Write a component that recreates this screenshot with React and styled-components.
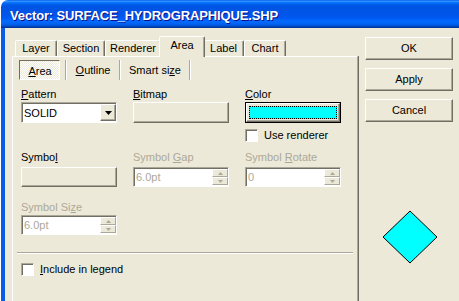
import styled, { createGlobalStyle, css } from "styled-components";

const face = "#ECE9D8";
const shadow = "#ACA899";
const dark = "#716F64";

const GlobalStyle = createGlobalStyle`
  html, body {
    margin: 0;
    padding: 0;
    background: #fff;
    overflow: hidden;
  }
  body {
    font-family: "Liberation Sans", Arial, sans-serif;
    font-size: 11px;
    color: #000;
  }
`;

const raised = css`
  box-sizing: border-box;
  background: ${face};
  border: 1px solid;
  border-color: #fff ${dark} ${dark} #fff;
  box-shadow: inset -1px -1px ${shadow};
`;

const sunken = css`
  box-sizing: border-box;
  border: 1px solid;
  border-color: ${shadow} #fff #fff ${shadow};
  box-shadow: inset 1px 1px ${dark};
`;

const Window = styled.div`
  display: flex;
  flex-direction: column;
  width: 458px;
  height: 301px;
  margin-left: 1px;
  overflow: hidden;
`;

const TitleBar = styled.div`
  flex: none;
  height: 28px;
  box-sizing: border-box;
  display: flex;
  align-items: center;
  padding: 2px 0 0 9px;
  border-radius: 7px 0 0 0;
  background: linear-gradient(
    to bottom,
    #0058ee 0%,
    #3593ff 4%,
    #288eff 6%,
    #127dff 8%,
    #036ffc 10%,
    #0262ee 14%,
    #0057e5 20%,
    #0054e3 24%,
    #0055eb 56%,
    #005bf5 66%,
    #026afe 76%,
    #0062ef 86%,
    #0052d6 92%,
    #0040ab 96%,
    #003092 100%
  );
  color: #fff;
  font: bold 13px "Liberation Sans", Arial, sans-serif;
  letter-spacing: -0.15px;
  text-shadow: 1px 1px #0f1089;
  white-space: nowrap;
`;

const Frame = styled.div`
  flex: 1;
  min-height: 0;
  display: flex;
  background: ${face};
  border-left: 4px solid #0a5be6;
  padding: 8px 0 0 7px;
`;

const LeftCol = styled.div`
  width: 346px;
  display: flex;
  flex-direction: column;
`;

const TabStrip = styled.div`
  height: 20px;
  display: flex;
  align-items: flex-end;
  padding-left: 3px;
`;

const Tab = styled.div`
  box-sizing: border-box;
  width: ${(p) => (p.$active ? p.$w + 4 : p.$w)}px;
  height: ${(p) => (p.$active ? 21 : 16)}px;
  margin: ${(p) => (p.$active ? "0 -2px -1px" : "0")};
  padding-top: ${(p) => (p.$active ? 1 : 0)}px;
  position: relative;
  z-index: ${(p) => (p.$active ? 1 : 0)};
  background: ${face};
  border: 1px solid;
  border-bottom: none;
  border-color: #fff ${dark} transparent #fff;
  border-radius: 2px 2px 0 0;
  box-shadow: inset -1px 0 ${shadow};
  line-height: 15px;
  text-align: center;
  white-space: nowrap;
`;

const Panel = styled.div`
  flex: 1;
  display: flex;
  flex-direction: column;
  border-top: 1px solid #fff;
  border-left: 1px solid #fff;
  border-right: 1px solid ${shadow};
  box-shadow: 1px 0 0 ${dark};
  padding: 3px 0 0 8px;
`;

const SubTabs = styled.div`
  display: flex;
  align-items: center;
  height: 20px;
  margin-left: -2px;
`;

const SubTab = styled.div`
  box-sizing: border-box;
  width: ${(p) => p.$w}px;
  height: 20px;
  line-height: 18px;
  text-align: center;
  white-space: nowrap;
  border: 1px solid transparent;
  ${(p) =>
    p.$active &&
    css`
      border-color: ${dark} #fff #fff ${dark};
      padding: 1px 0 0 1px;
      background: repeating-conic-gradient(#fff 0 25%, ${face} 0 50%) 0 0 / 2px 2px;
    `}
`;

const SubSep = styled.div`
  width: 2px;
  height: 20px;
  margin-left: ${(p) => p.$ml || 0}px;
  background: linear-gradient(to right, ${shadow} 50%, #fff 50%);
`;

const U = styled.span`
  text-decoration: underline;
`;

const Grid = styled.div`
  display: grid;
  grid-template-columns: repeat(3, 96px);
  column-gap: 16px;
  margin-top: ${(p) => p.$mt}px;
`;

const Field = styled.div`
  display: flex;
  flex-direction: column;
  grid-column: ${(p) => p.$col || "auto"};
`;

const Label = styled.div`
  height: 16px;
  line-height: 16px;
  margin-bottom: ${(p) => p.$gap || 0}px;
  color: ${(p) => (p.$disabled ? shadow : "#000")};
  white-space: nowrap;
`;

const Combo = styled.div`
  ${sunken};
  height: 21px;
  display: flex;
  align-items: center;
  background: #fff;
  padding-left: 2px;
`;

const DropBtn = styled.div`
  ${raised};
  width: 16px;
  height: 17px;
  margin-left: auto;
  display: flex;
  align-items: center;
  justify-content: center;
`;

const PlainButton = styled.div`
  ${raised};
  height: ${(p) => p.$h || 21}px;
`;

const ColorButton = styled.div`
  box-sizing: border-box;
  height: 21px;
  border: 1px solid #000;
  display: flex;
`;

const ColorInner = styled.div`
  ${raised};
  flex: 1;
  display: flex;
  padding: 2px;
`;

const Swatch = styled.div`
  flex: 1;
  background: #00ffff;
  border: 1px dotted #000;
`;

const CheckRow = styled.div`
  display: flex;
  align-items: center;
  gap: 6px;
  height: 13px;
  line-height: 13px;
  white-space: nowrap;
  grid-column: ${(p) => p.$col || "auto"};
  margin-top: ${(p) => p.$mt || 0}px;
`;

const Box = styled.div`
  ${sunken};
  width: 13px;
  height: 13px;
  background: #fff;
`;

const SpinBox = styled.div`
  ${sunken};
  height: 20px;
  display: flex;
  align-items: center;
  background: #fff;
  padding-left: 2px;
  color: ${shadow};
`;

const SpinCol = styled.div`
  width: 16px;
  height: 16px;
  margin-left: auto;
  display: flex;
  flex-direction: column;
`;

const SpinBtn = styled.div`
  flex: 1;
  box-sizing: border-box;
  background: ${face};
  border: 1px solid;
  border-color: #fff ${shadow} ${shadow} #fff;
  display: flex;
  align-items: center;
  justify-content: center;
`;

const Separator = styled.div`
  height: 0;
  margin: 17px 4px 0 -4px;
  border-top: 1px solid ${shadow};
  border-bottom: 1px solid #fff;
`;

const RightCol = styled.div`
  width: 88px;
  margin-left: 7px;
  padding-top: 1px;
  display: flex;
  flex-direction: column;
  align-items: center;
  gap: 8px;
`;

const DlgButton = styled.div`
  ${raised};
  width: 88px;
  height: 23px;
  line-height: 21px;
  text-align: center;
`;

const Diamond = styled.svg`
  margin: 80px 0 0 2px;
  display: block;
`;

const Arrow = ({ up, color = "#000", w = 7, h = 4 }) => (
  <svg width={w} height={h} viewBox={`0 0 ${w} ${h}`}>
    <polygon
      points={up ? `${w / 2},0 ${w},${h} 0,${h}` : `0,0 ${w},0 ${w / 2},${h}`}
      fill={color}
    />
  </svg>
);

const Spinner = ({ value }) => (
  <SpinBox>
    {value}
    <SpinCol>
      <SpinBtn>
        <Arrow up w={5} h={3} color={shadow} />
      </SpinBtn>
      <SpinBtn>
        <Arrow w={5} h={3} color={shadow} />
      </SpinBtn>
    </SpinCol>
  </SpinBox>
);

const tabs = [
  ["Layer", 42],
  ["Section", 48],
  ["Renderer", 56],
  ["Area", 42],
  ["Label", 41],
  ["Chart", 42],
];

export default function App() {
  return (
    <>
      <GlobalStyle />
      <Window>
        <TitleBar>Vector: SURFACE_HYDROGRAPHIQUE.SHP</TitleBar>
        <Frame>
          <LeftCol>
            <TabStrip>
              {tabs.map(([name, w]) => (
                <Tab key={name} $w={w} $active={name === "Area"}>
                  {name}
                </Tab>
              ))}
            </TabStrip>
            <Panel>
              <SubTabs>
                <SubTab $w={41} $active>
                  <U>A</U>rea
                </SubTab>
                <SubSep $ml={5} />
                <SubTab $w={52}>
                  <U>O</U>utline
                </SubTab>
                <SubSep />
                <SubTab $w={68}>
                  Smart si<U>z</U>e
                </SubTab>
                <SubSep />
              </SubTabs>

              <Grid $mt={6}>
                <Field>
                  <Label>
                    <U>P</U>attern
                  </Label>
                  <Combo>
                    SOLID
                    <DropBtn>
                      <Arrow />
                    </DropBtn>
                  </Combo>
                </Field>
                <Field>
                  <Label>
                    <U>B</U>itmap
                  </Label>
                  <PlainButton />
                </Field>
                <Field>
                  <Label>
                    <U>C</U>olor
                  </Label>
                  <ColorButton>
                    <ColorInner>
                      <Swatch />
                    </ColorInner>
                  </ColorButton>
                </Field>
                <CheckRow $col={3} $mt={6}>
                  <Box />
                  Use renderer
                </CheckRow>
              </Grid>

              <Grid $mt={7}>
                <Field>
                  <Label $gap={2}>
                    Symbo<U>l</U>
                  </Label>
                  <PlainButton $h={20} />
                </Field>
                <Field>
                  <Label $gap={2} $disabled>
                    Symbol <U>G</U>ap
                  </Label>
                  <Spinner value="6.0pt" />
                </Field>
                <Field>
                  <Label $gap={2} $disabled>
                    Symbol <U>R</U>otate
                  </Label>
                  <Spinner value="0" />
                </Field>
              </Grid>

              <Grid $mt={12}>
                <Field>
                  <Label $disabled>
                    Symbol Si<U>z</U>e
                  </Label>
                  <Spinner value="6.0pt" />
                </Field>
              </Grid>

              <Separator />

              <CheckRow $mt={9}>
                <Box />
                <span>
                  <U>I</U>nclude in legend
                </span>
              </CheckRow>
            </Panel>
          </LeftCol>

          <RightCol>
            <DlgButton>OK</DlgButton>
            <DlgButton>Apply</DlgButton>
            <DlgButton>Cancel</DlgButton>
            <Diamond width="56" height="54" viewBox="0 0 56 54">
              <polygon
                points="28,1 55,27 28,53 1,27"
                fill="#00ffff"
                stroke="#000"
                strokeWidth="1"
              />
            </Diamond>
          </RightCol>
        </Frame>
      </Window>
    </>
  );
}
